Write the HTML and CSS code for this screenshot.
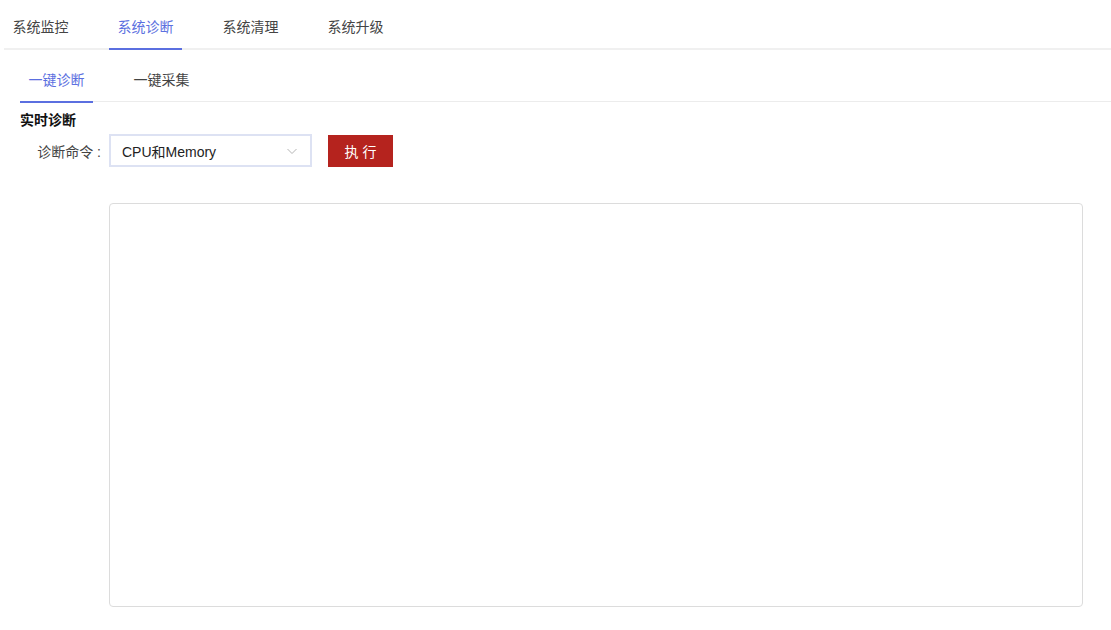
FILE: index.html
```html
<!DOCTYPE html>
<html lang="zh-CN">
<head>
    <meta charset="UTF-8">
    <title>系统诊断</title>
    <link rel="stylesheet" href="styles.css">
</head>
<body>

<div class="tabs">
    <div class="tab">系统监控</div>
    <div class="tab active">系统诊断</div>
    <div class="tab">系统清理</div>
    <div class="tab">系统升级</div>
</div>

<div class="panel">
    <div class="subtabs">
        <div class="tab active">一键诊断</div>
        <div class="tab">一键采集</div>
    </div>

    <div class="section-title">实时诊断</div>

    <div class="form-row">
        <label class="form-label">诊断命令 :</label>
        <div class="select">
            <span>CPU和Memory</span>
            <svg class="arrow" width="12" height="12" viewBox="0 0 12 12">
                <path d="M1.5 4 L6 8.5 L10.5 4" fill="none" stroke="#b5b5b5" stroke-width="1"/>
            </svg>
        </div>
        <button class="run-btn" type="button">执 行</button>
    </div>

    <div class="output"></div>
</div>

</body>
</html>
```

FILE: styles.css
```css
body {
    font-family: "Liberation Sans", "Noto Sans CJK SC", sans-serif;
    background-color: #fff;
    color: #333;
    margin: 0;
    padding: 0 0 0 4px;
    font-size: 14px;
}

.tabs {
    display: flex;
    gap: 32px;
    height: 48px;
    border-bottom: 2px solid #f0f0f0;
}

.tab {
    width: 73px;
    text-align: center;
    line-height: 54px;
    color: #444;
    box-sizing: border-box;
}

.tab.active {
    color: #5b6fe0;
    border-bottom: 2px solid #5b6fe0;
}

.tabs .tab {
    height: 50px;
}

.panel {
    padding-left: 16px;
}

.subtabs {
    display: flex;
    gap: 32px;
    height: 51px;
    border-bottom: 1px solid #ececec;
}

.subtabs .tab {
    height: 53px;
    line-height: 61px;
}

.section-title {
    font-weight: bold;
    color: #111;
    margin-top: 9px;
    line-height: 18px;
}

.form-row {
    display: flex;
    align-items: center;
    margin-top: 5px;
    margin-left: -16px;
}

.form-label {
    text-align: right;
    color: #444;
    padding-right: 8px;
    box-sizing: border-box;
    width: 105px;
}

.select {
    width: 203px;
    height: 33px;
    box-sizing: border-box;
    border: 2px solid #dde2f3;
    display: flex;
    align-items: center;
    justify-content: space-between;
    padding: 0 12px 0 11px;
    color: #222;
}

.arrow {
    margin-top: 1px;
}

.run-btn {
    margin-left: 16px;
    width: 65px;
    height: 32px;
    border: none;
    background-color: #b5231e;
    color: white;
    font-family: inherit;
    font-size: 14px;
    cursor: pointer;
}

.output {
    margin-top: 36px;
    margin-left: 89px;
    width: 974px;
    height: 404px;
    box-sizing: border-box;
    border: 1px solid #dcdcdc;
    border-radius: 4px;
}
```
